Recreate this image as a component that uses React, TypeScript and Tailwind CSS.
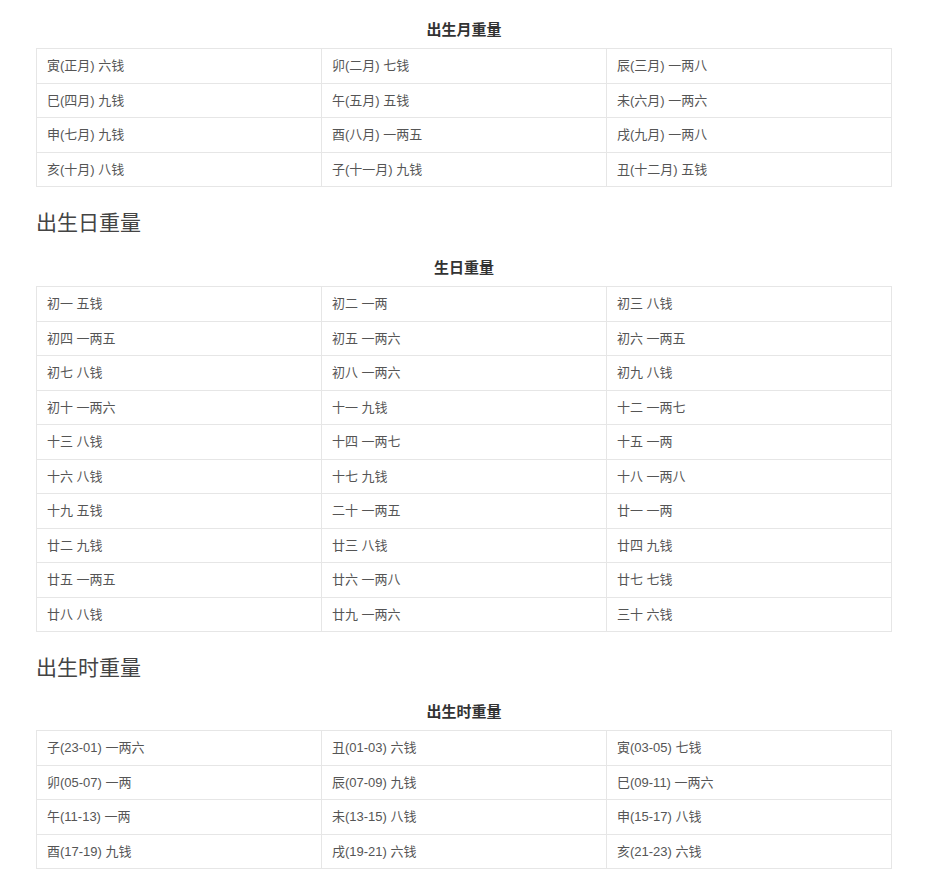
import React from "react";

const month: string[][] = [
  ["寅(正月) 六钱", "卯(二月) 七钱", "辰(三月) 一两八"],
  ["巳(四月) 九钱", "午(五月) 五钱", "未(六月) 一两六"],
  ["申(七月) 九钱", "酉(八月) 一两五", "戌(九月) 一两八"],
  ["亥(十月) 八钱", "子(十一月) 九钱", "丑(十二月) 五钱"],
];

const day: string[][] = [
  ["初一 五钱", "初二 一两", "初三 八钱"],
  ["初四 一两五", "初五 一两六", "初六 一两五"],
  ["初七 八钱", "初八 一两六", "初九 八钱"],
  ["初十 一两六", "十一 九钱", "十二 一两七"],
  ["十三 八钱", "十四 一两七", "十五 一两"],
  ["十六 八钱", "十七 九钱", "十八 一两八"],
  ["十九 五钱", "二十 一两五", "廿一 一两"],
  ["廿二 九钱", "廿三 八钱", "廿四 九钱"],
  ["廿五 一两五", "廿六 一两八", "廿七 七钱"],
  ["廿八 八钱", "廿九 一两六", "三十 六钱"],
];

const hour: string[][] = [
  ["子(23-01) 一两六", "丑(01-03) 六钱", "寅(03-05) 七钱"],
  ["卯(05-07) 一两", "辰(07-09) 九钱", "巳(09-11) 一两六"],
  ["午(11-13) 一两", "未(13-15) 八钱", "申(15-17) 八钱"],
  ["酉(17-19) 九钱", "戌(19-21) 六钱", "亥(21-23) 六钱"],
];

function WeightTable({ caption, rows }: { caption: string; rows: string[][] }) {
  return (
    <div>
      <div className="text-center text-[15px] font-bold leading-[20px] text-[#333] pb-[8px]">{caption}</div>
      <table className="w-full table-fixed border-collapse border border-[#e6e6e6]">
        <tbody>
          {rows.map((r, i) => (
            <tr key={i}>
              {r.map((c, j) => (
                <td
                  key={j}
                  className="border border-[#e6e6e6] px-[10px] py-[7px] text-[13px] leading-[19.5px] text-[#555]"
                >
                  {c}
                </td>
              ))}
            </tr>
          ))}
        </tbody>
      </table>
    </div>
  );
}

export default function App() {
  return (
    <div
      className="bg-white min-h-[895px] pt-[20px]"
      style={{ fontFamily: '"Liberation Sans", "Noto Sans CJK SC", sans-serif' }}
    >
      <div className="ml-[36px] w-[856px]">
        <WeightTable caption="出生月重量" rows={month} />
        <h2 className="mt-[21px] mb-[20px] text-[21px] leading-[30px] font-normal text-[#444]">出生日重量</h2>
        <WeightTable caption="生日重量" rows={day} />
        <h2 className="mt-[21px] mb-[19px] text-[21px] leading-[30px] font-normal text-[#444]">出生时重量</h2>
        <WeightTable caption="出生时重量" rows={hour} />
      </div>
    </div>
  );
}
